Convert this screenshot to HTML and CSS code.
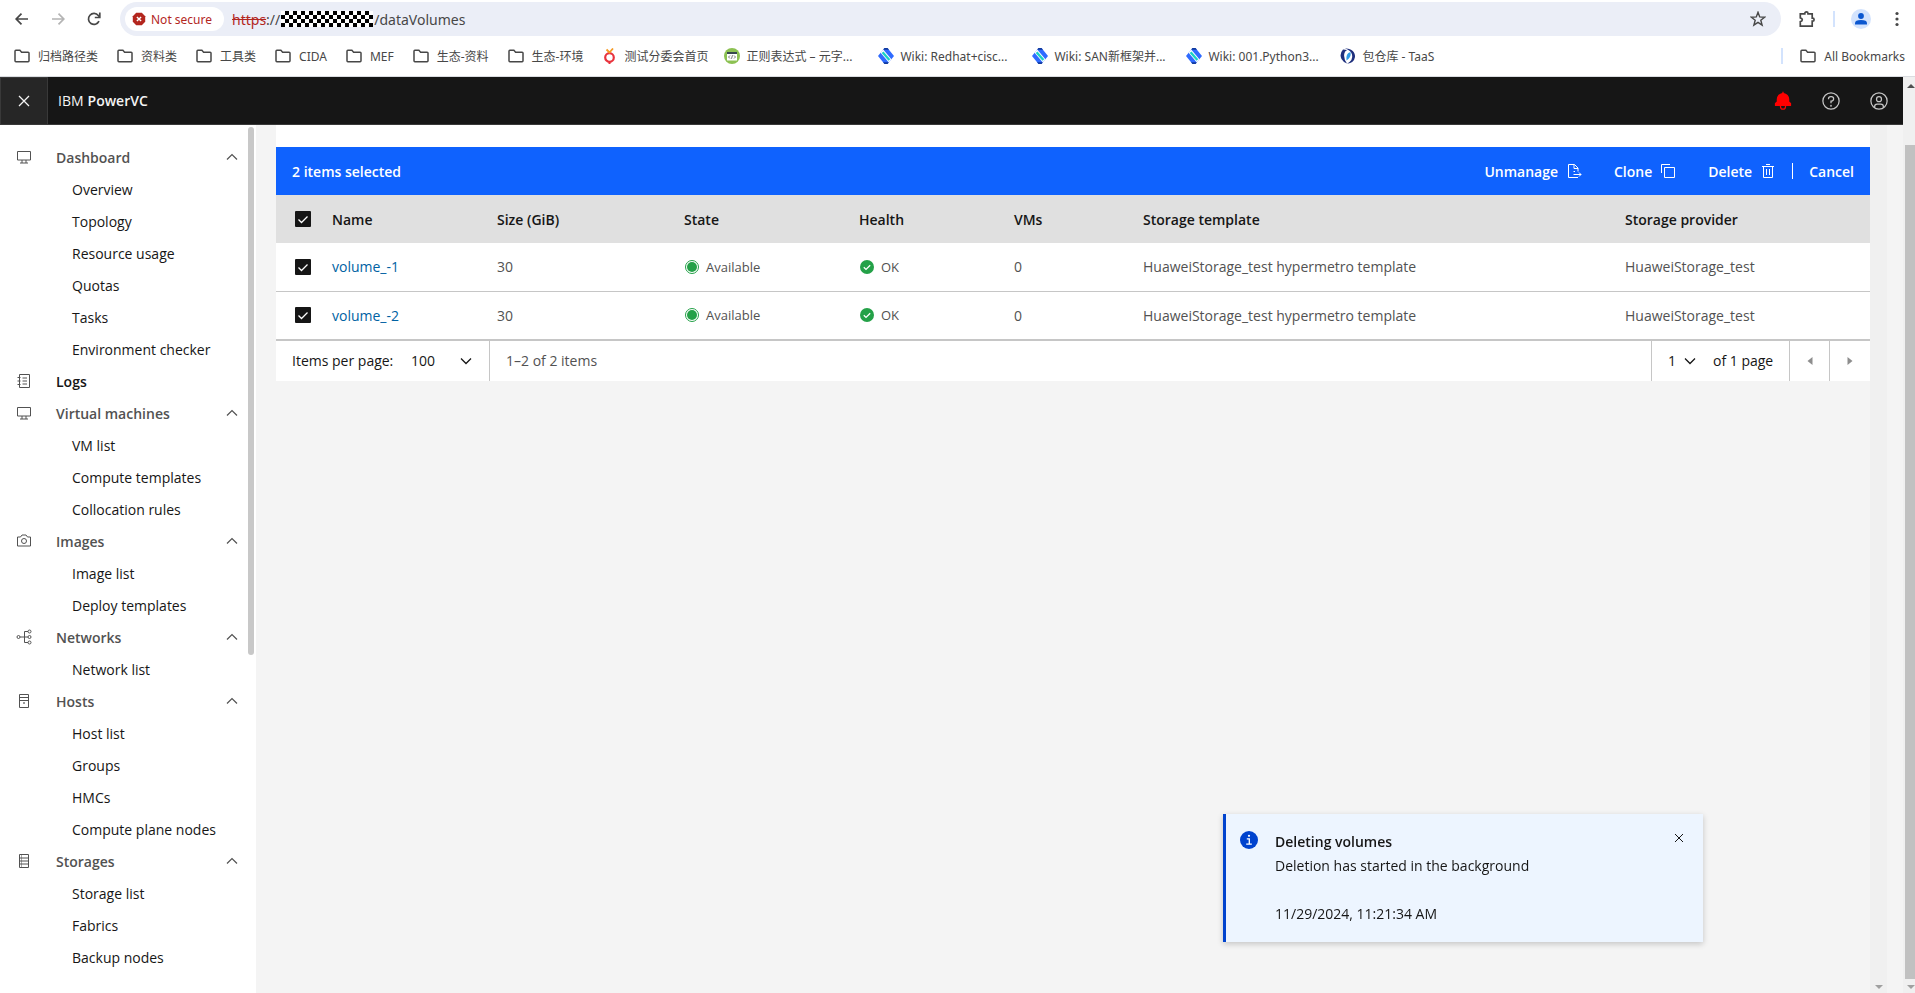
FILE: index.html
```html
<!DOCTYPE html>
<html lang="en">
  <head>
    <meta charset="UTF-8" />
    <meta name="viewport" content="width=device-width, initial-scale=1.0" />
    <title>IBM PowerVC</title>
    <link rel="stylesheet" href="styles.css">
  </head>
  <body>
    <!-- Shared icons -->
    <svg class="sprite" aria-hidden="true">
      <symbol id="folder" viewBox="0 0 16 16">
        <path d="M1 3.2q0-.9.9-.9h4l1.700 1.900h6.500q.9 0 .9.9v7.700q0 .9-.9.9H1.900q-.9 0-.9-.9z" fill="none" stroke="#474747" stroke-width="1.500" />
      </symbol>
      <symbol id="wiki" viewBox="0 0 16 16">
        <path d="M6.500 0h3L16 8 9.500 16h-3L0 8z" fill="#2f6bff" />
        <path d="M6.500 0h3l1.500 1.800H5zM9.500 16h-3L5 14.200h6z" fill="#123a9c" />
        <path d="M2.600 4.800 5.200 1.600 13.400 11.200 10.800 14.400z" fill="#fff" />
        <path d="M4.600 4.200 11.400 12" stroke="#19d3c5" stroke-width="2.400" />
      </symbol>
      <symbol id="screen" viewBox="0 0 32 32">
        <path d="M3 5h26v17H3zM12 22v6M20 22v6M8 28h16" fill="none" stroke="currentColor" stroke-width="2" />
      </symbol>
      <symbol id="chevron-up" viewBox="0 0 16 16">
        <path d="M3 10.500 8 5.500l5 5" fill="none" stroke="currentColor" stroke-width="1.200" />
      </symbol>
      <symbol id="chevron-down" viewBox="0 0 16 16">
        <path d="M3 5.500 8 10.500l5-5" fill="none" stroke="currentColor" stroke-width="1.300" />
      </symbol>
      <symbol id="close" viewBox="0 0 32 32">
        <path d="M8 8 24 24M24 8 8 24" fill="none" stroke="currentColor" stroke-width="2" />
      </symbol>
      <symbol id="available" viewBox="0 0 16 16">
        <circle cx="8" cy="8" r="6.500" fill="none" stroke="#24a148" />
        <circle cx="8" cy="8" r="5" fill="#24a148" />
      </symbol>
      <symbol id="ok" viewBox="0 0 16 16">
        <circle cx="8" cy="8" r="7" fill="#24a148" />
        <path d="M4.800 8.300 7 10.400 11.200 6.200" fill="none" stroke="#fff" stroke-width="1.300" />
      </symbol>
    </svg>

    <div class="browser">
      <div class="toolbar">
        <button class="nav-button" aria-label="Back">
          <svg viewBox="0 0 16 16"><path d="M14 8H2.500M7.500 2.700 2.200 8l5.300 5.300" fill="none" stroke="#474747" stroke-width="1.700" /></svg>
        </button>
        <button class="nav-button disabled" aria-label="Forward">
          <svg viewBox="0 0 16 16"><path d="M2 8h11.500M8.500 2.700 13.800 8l-5.300 5.300" fill="none" stroke="#b4b4b4" stroke-width="1.700" /></svg>
        </button>
        <button class="nav-button" aria-label="Reload">
          <svg viewBox="0 0 16 16"><path d="M13 10.200A5.500 5.500 0 1 1 12.300 4.500L13.500 6" fill="none" stroke="#474747" stroke-width="1.700" /><path d="M13.800 1.500v5H8.800" fill="none" stroke="#474747" stroke-width="1.700" /></svg>
        </button>
        <div class="address">
          <button class="secure">
            <svg class="danger-icon" viewBox="0 0 14 14"><path d="M4.200.8h5.600L13.200 4.200v5.600l-3.400 3.400H4.200L.8 9.800V4.200z" fill="#b3261e" /><path d="M4.900 4.900l4.200 4.200M9.100 4.900 4.900 9.100" stroke="#fff" stroke-width="1.400" /></svg>
            Not secure
          </button>
          <div class="url"><span class="scheme">https</span>://<span class="mask"></span>/dataVolumes</div>
          <button class="star" aria-label="Bookmark this tab">
            <svg viewBox="0 0 16 16"><path d="M8 1.300 9.700 5.900l5 .3-3.900 3.100 1.300 4.800L8 11.400l-4.100 2.700 1.300-4.800L1.300 6.200l5-.3z" fill="none" stroke="#474747" stroke-width="1.400" /></svg>
          </button>
        </div>
        <button class="tool-button" aria-label="Extensions">
          <svg class="puzzle" viewBox="0 0 18 18"><path d="M2.300 3.800h4.500V3.400a1.600 1.600 0 0 1 3.200 0v.4h4.200v4.400h.4a1.500 1.500 0 0 1 0 3h-.4v5H2.300v-4.500q2-.4 2-1.900t-2-1.900z" fill="none" stroke="#474747" stroke-width="1.700" /></svg>
        </button>
        <span class="divider"></span>
        <button class="tool-button profile" aria-label="Profile">
          <svg class="avatar" viewBox="0 0 20 20"><circle cx="10" cy="10" r="10" fill="#d3e3fd" /><circle cx="10" cy="7" r="2.900" fill="#0b57d0" /><path d="M4 15.500v-1.300q0-3.200 6-3.200t6 3.200v1.300z" fill="#0b57d0" /></svg>
        </button>
        <button class="tool-button" aria-label="Menu">
          <svg viewBox="0 0 16 16"><g fill="#474747"><circle cx="8" cy="2.500" r="1.600" /><circle cx="8" cy="8" r="1.600" /><circle cx="8" cy="13.500" r="1.600" /></g></svg>
        </button>
      </div>
      <div class="bookmarks">
        <a class="folder" href="#"><svg><use href="#folder" /></svg>归档路径类</a>
        <a class="folder" href="#"><svg><use href="#folder" /></svg>资料类</a>
        <a class="folder" href="#"><svg><use href="#folder" /></svg>工具类</a>
        <a class="folder" href="#"><svg><use href="#folder" /></svg>CIDA</a>
        <a class="folder" href="#"><svg><use href="#folder" /></svg>MEF</a>
        <a class="folder" href="#"><svg><use href="#folder" /></svg>生态-资料</a>
        <a class="folder" href="#"><svg><use href="#folder" /></svg>生态-环境</a>
        <a href="#">
          <svg viewBox="0 0 16 16"><circle cx="7.500" cy="9.500" r="4.300" fill="none" stroke="#e8323c" stroke-width="2.200" /><path d="M6.500 13h2v3h-2z" fill="#e8323c" /><path d="M4.500 1.500 7.500 4.500 11 .5" fill="none" stroke="#f59a23" stroke-width="1.800" /></svg>
          测试分委会首页
        </a>
        <a class="wide" href="#">
          <svg viewBox="0 0 16 16"><circle cx="8" cy="8" r="8" fill="#8cc152" /><path d="M3 4h10v8.500H3z" fill="#fff" /><path d="M3 4h10v2H3z" fill="#37474f" /><path d="M6 7.500 4.500 9 6 10.500M10 7.500 11.500 9 10 10.500M8.500 7.200 7.500 10.800" fill="none" stroke="#555" stroke-width=".8" /></svg>
          正则表达式 – 元字...
        </a>
        <a class="wide" href="#"><svg><use href="#wiki" /></svg>Wiki: Redhat+cisc...</a>
        <a class="wide" href="#"><svg><use href="#wiki" /></svg>Wiki: SAN新框架并...</a>
        <a class="wide" href="#"><svg><use href="#wiki" /></svg>Wiki: 001.Python3...</a>
        <a href="#">
          <svg viewBox="0 0 16 16"><path d="M5 .6C11 0 15.500 4 15 9q-1 6-8 6.800Q13.500 12 12 6.500 10.500 2 5 .6z" fill="#1e2f7d" /><path d="M3 1.500Q-1 6 1.500 11 3.500 14.500 7 15.500 3 10 4.500 5 5 3 7 2.300 5 1.400 3 1.500z" fill="#1e2f7d" /><path d="M10.500 4Q5.500 5 6.500 12.500 11.500 9.500 10.500 4z" fill="#2f9be6" /></svg>
          包仓库 - TaaS
        </a>
        <span class="divider bookmark-divider"></span>
        <a class="folder all-bookmarks" href="#"><svg><use href="#folder" /></svg>All Bookmarks</a>
      </div>
    </div>

    <div class="viewport">
      <div class="app">
        <header class="header">
          <button class="menu-button" aria-label="Close menu"><svg><use href="#close" /></svg></button>
          <a class="brand" href="#">IBM <b>PowerVC</b></a>
          <button class="header-button" aria-label="Notifications">
            <svg viewBox="0 0 32 32"><path d="M28.700 19.300 26 16.600V13a10 10 0 0 0-9-9.950V1h-2v2.050A10 10 0 0 0 6 13v3.600l-2.700 2.700A1 1 0 0 0 3 20v3a1 1 0 0 0 1 1h7v1a5 5 0 0 0 10 0v-1h7a1 1 0 0 0 1-1v-3a1 1 0 0 0-.3-.7zM19 25a3 3 0 0 1-6 0v-1h6z" fill="#ff0000" /></svg>
          </button>
          <button class="header-button" aria-label="Help">
            <svg viewBox="0 0 32 32" fill="none" stroke="currentColor" stroke-width="2"><circle cx="16" cy="16" r="13" /><path d="M12 13v-.5A3.500 3.500 0 0 1 15.500 9h1.200a3.500 3.500 0 0 1 0 7H16v3.500" /><circle cx="16" cy="23.500" r=".5" /></svg>
          </button>
          <button class="header-button" aria-label="User">
            <svg viewBox="0 0 32 32" fill="none" stroke="currentColor" stroke-width="2"><circle cx="16" cy="16" r="13" /><circle cx="16" cy="13" r="4" /><path d="M9 26.500V25a4 4 0 0 1 4-4h6a4 4 0 0 1 4 4v1.500" /></svg>
          </button>
        </header>

        <div class="content">
          <nav class="sidebar">
            <ul>
              <li><button class="group"><svg><use href="#screen" /></svg>Dashboard<svg class="chevron"><use href="#chevron-up" /></svg></button></li>
              <li><a href="#">Overview</a></li>
              <li><a href="#">Topology</a></li>
              <li><a href="#">Resource usage</a></li>
              <li><a href="#">Quotas</a></li>
              <li><a href="#">Tasks</a></li>
              <li><a href="#">Environment checker</a></li>
              <li>
                <a class="group logs" href="#">
                  <svg viewBox="0 0 32 32" fill="none" stroke="currentColor" stroke-width="2"><path d="M7 3h20v26H7zM3 9h6M3 16h6M3 23h6M13 10h9M13 16h9M13 22h9" /></svg>
                  Logs
                </a>
              </li>
              <li><button class="group"><svg><use href="#screen" /></svg>Virtual machines<svg class="chevron"><use href="#chevron-up" /></svg></button></li>
              <li><a href="#">VM list</a></li>
              <li><a href="#">Compute templates</a></li>
              <li><a href="#">Collocation rules</a></li>
              <li>
                <button class="group">
                  <svg viewBox="0 0 32 32" fill="none" stroke="currentColor" stroke-width="2"><path d="M3 8h6l3-4h8l3 4h6v18H3z" /><circle cx="16" cy="16" r="5" /></svg>
                  Images<svg class="chevron"><use href="#chevron-up" /></svg>
                </button>
              </li>
              <li><a href="#">Image list</a></li>
              <li><a href="#">Deploy templates</a></li>
              <li>
                <button class="group">
                  <svg viewBox="0 0 32 32" fill="none" stroke="currentColor" stroke-width="2"><circle cx="5" cy="16" r="3" /><circle cx="27" cy="5" r="3" /><circle cx="27" cy="16" r="3" /><circle cx="27" cy="27" r="3" /><path d="M8 16h16M24 5h-7v22h7" /></svg>
                  Networks<svg class="chevron"><use href="#chevron-up" /></svg>
                </button>
              </li>
              <li><a href="#">Network list</a></li>
              <li>
                <button class="group">
                  <svg viewBox="0 0 32 32" fill="none" stroke="currentColor" stroke-width="2"><path d="M7 3h18v26H7zM7 9h18M7 15h18" /><circle cx="16" cy="20" r="1" /></svg>
                  Hosts<svg class="chevron"><use href="#chevron-up" /></svg>
                </button>
              </li>
              <li><a href="#">Host list</a></li>
              <li><a href="#">Groups</a></li>
              <li><a href="#">HMCs</a></li>
              <li><a href="#">Compute plane nodes</a></li>
              <li>
                <button class="group">
                  <svg viewBox="0 0 32 32" fill="none" stroke="currentColor" stroke-width="2"><path d="M7 3h18v26H7zM7 10h18M7 16h18M7 22h18" /><path d="M11 4v24" stroke-width="1" /></svg>
                  Storages<svg class="chevron"><use href="#chevron-up" /></svg>
                </button>
              </li>
              <li><a href="#">Storage list</a></li>
              <li><a href="#">Fabrics</a></li>
              <li><a href="#">Backup nodes</a></li>
            </ul>
            <div class="sidebar-scroll"></div>
          </nav>

          <main class="main">
            <div class="volumes">
              <div class="batch-actions">
                <span class="selected-count">2 items selected</span>
                <button>Unmanage
                  <svg viewBox="0 0 32 32" fill="none" stroke="currentColor" stroke-width="2"><path d="M24 29H5V3h12l7 7v7M16 3v8h8M15 17h3M15 23h15M26 19l4 4-4 4" /></svg>
                </button>
                <button>Clone
                  <svg viewBox="0 0 32 32" fill="none" stroke="currentColor" stroke-width="2"><path d="M9 9h20v20H9zM3 20V3h17" /></svg>
                </button>
                <button>Delete
                  <svg viewBox="0 0 32 32" fill="none" stroke="currentColor" stroke-width="2"><path d="M4 7h24M7 7v22h18V7M12 3h8M13 12v12M19 12v12" /></svg>
                </button>
                <button class="cancel">Cancel</button>
              </div>
              <table>
                <colgroup>
                  <col class="col-check" />
                  <col class="col-name" />
                  <col class="col-size" />
                  <col class="col-state" />
                  <col class="col-health" />
                  <col class="col-vms" />
                  <col />
                  <col class="col-provider" />
                </colgroup>
                <thead>
                  <tr>
                    <th class="check"><input type="checkbox" aria-label="Select all" checked /></th>
                    <th>Name</th>
                    <th>Size (GiB)</th>
                    <th>State</th>
                    <th>Health</th>
                    <th>VMs</th>
                    <th>Storage template</th>
                    <th>Storage provider</th>
                  </tr>
                </thead>
                <tbody>
                  <tr>
                    <td class="check"><input type="checkbox" aria-label="Select volume_-1" checked /></td>
                    <td><a href="#">volume_-1</a></td>
                    <td>30</td>
                    <td><span class="status"><svg><use href="#available" /></svg>Available</span></td>
                    <td><span class="status"><svg><use href="#ok" /></svg>OK</span></td>
                    <td>0</td>
                    <td>HuaweiStorage_test hypermetro template</td>
                    <td>HuaweiStorage_test</td>
                  </tr>
                  <tr>
                    <td class="check"><input type="checkbox" aria-label="Select volume_-2" checked /></td>
                    <td><a href="#">volume_-2</a></td>
                    <td>30</td>
                    <td><span class="status"><svg><use href="#available" /></svg>Available</span></td>
                    <td><span class="status"><svg><use href="#ok" /></svg>OK</span></td>
                    <td>0</td>
                    <td>HuaweiStorage_test hypermetro template</td>
                    <td>HuaweiStorage_test</td>
                  </tr>
                </tbody>
              </table>
              <div class="pagination">
                <label class="page-size-label" for="page-size">Items per page:</label>
                <div class="select page-size">
                  <select id="page-size"><option>100</option></select>
                  <svg><use href="#chevron-down" /></svg>
                </div>
                <span class="range">1–2 of 2 items</span>
                <div class="select page-number">
                  <select id="page-number"><option>1</option></select>
                  <svg><use href="#chevron-down" /></svg>
                </div>
                <label class="page-total" for="page-number">of 1 page</label>
                <button aria-label="Previous page"><svg viewBox="0 0 16 16"><path d="M10.500 4v8L5.500 8z" fill="#8d8d8d" /></svg></button>
                <button aria-label="Next page"><svg viewBox="0 0 16 16"><path d="M5.500 4v8l5-4z" fill="#8d8d8d" /></svg></button>
              </div>
            </div>
            <div class="track">
              <span class="arrow-down"></span>
            </div>
          </main>
        </div>
      </div>
      <div class="page-scroll">
        <span class="arrow-up"></span>
        <div class="thumb"></div>
        <span class="arrow-down"></span>
      </div>
    </div>

    <div class="toast" role="status">
      <svg class="toast-icon" viewBox="0 0 20 20"><circle cx="10" cy="10" r="9" fill="#0043ce" /><circle cx="10" cy="5.800" r="1.100" fill="#fff" /><path d="M7.800 8.800h2.500v5.200M7.200 14.200h5.600" fill="none" stroke="#fff" stroke-width="1.300" /></svg>
      <div class="toast-text">
        <h3>Deleting volumes</h3>
        <p>Deletion has started in the background</p>
        <time>11/29/2024, 11:21:34 AM</time>
      </div>
      <button class="toast-close" aria-label="Close notification"><svg><use href="#close" /></svg></button>
    </div>
  </body>
</html>
```
FILE: styles.css
```css
* {
  box-sizing: border-box;
}

body {
  margin: 0;
  height: 100vh;
  overflow: hidden;
  display: flex;
  flex-direction: column;
  font-family: "Open Sans", "Liberation Sans", sans-serif;
  font-size: 14px;
  color: #161616;
  background-color: #f4f4f4;
}

button {
  padding: 0;
  border: none;
  background: none;
  font: inherit;
  color: inherit;
  cursor: pointer;
}

a {
  color: inherit;
  text-decoration: none;
}

svg {
  width: 16px;
  height: 16px;
  flex-shrink: 0;
  display: block;
}

.sprite {
  position: absolute;
  width: 0;
  height: 0;
}

/* Browser bars */
.browser {
  flex-shrink: 0;
  background-color: #ffffff;
  border-bottom: 1px solid #dadce0;
  font-family: "Noto Sans", "Noto Sans CJK SC", sans-serif;
  color: #474747;
}

.toolbar {
  display: flex;
  align-items: center;
  height: 38px;
  padding: 2px 0 2px 4px;
}

.nav-button {
  width: 36px;
  height: 34px;
  display: flex;
  align-items: center;
  justify-content: center;
}

.address {
  flex: 1;
  display: flex;
  align-items: center;
  height: 34px;
  margin: 0 8px;
  padding: 0 15px 0 5px;
  border-radius: 17px;
  background-color: #ebeef7;
}

.secure {
  display: flex;
  align-items: center;
  gap: 5px;
  height: 24px;
  padding: 0 12px 0 7px;
  border-radius: 12px;
  background-color: #ffffff;
  color: #b3261e;
  font-size: 12px;
}

.danger-icon {
  width: 14px;
  height: 14px;
}

.url {
  flex: 1;
  display: flex;
  align-items: center;
  margin-left: 8px;
  font-size: 14px;
}

.scheme {
  color: #b3261e;
  text-decoration: line-through;
}

.mask {
  width: 92px;
  height: 16px;
  margin: 0 1px;
  background: repeating-conic-gradient(#000000 0 25%, #ffffff 0 50%) 0 0 / 8px 8px;
}

.tool-button {
  width: 36px;
  height: 34px;
  display: flex;
  align-items: center;
  justify-content: center;
}

.puzzle {
  width: 18px;
  height: 18px;
}

.avatar {
  width: 20px;
  height: 20px;
}

.divider {
  width: 2px;
  height: 16px;
  margin: 0 8px;
  background-color: #d3e3fd;
}

.bookmarks {
  display: flex;
  align-items: center;
  height: 38px;
  padding: 0 10px 2px 14px;
  font-size: 12px;
  white-space: nowrap;
}

.bookmarks a {
  display: flex;
  align-items: center;
  gap: 6px;
  margin-right: 16px;
}

.bookmarks .folder {
  gap: 8px;
  margin-right: 19px;
}

.bookmarks .wide {
  width: 138px;
}

.bookmarks .bookmark-divider {
  margin: 0 17px 0 auto;
}

.bookmarks .all-bookmarks {
  margin-right: 0;
}

/* Application shell */
.viewport {
  flex: 1;
  min-height: 0;
  display: flex;
}

.app {
  flex: 1;
  min-width: 0;
  display: flex;
  flex-direction: column;
}

.header {
  display: flex;
  align-items: stretch;
  height: 48px;
  background-color: #161616;
  border-bottom: 1px solid #393939;
  color: #f4f4f4;
}

.menu-button,
.header-button {
  width: 48px;
  display: flex;
  align-items: center;
  justify-content: center;
}

.menu-button {
  background-color: #262626;
  border: 1px solid #393939;
  border-bottom: none;
}

.menu-button svg,
.header-button svg {
  width: 20px;
  height: 20px;
}

.header-button {
  color: #c6c6c6;
}

.brand {
  flex: 1;
  display: flex;
  align-items: center;
  gap: 4px;
  padding-left: 10px;
}

.brand b {
  font-weight: 600;
}

.content {
  flex: 1;
  min-height: 0;
  display: flex;
}

.sidebar {
  width: 256px;
  display: flex;
  padding: 2px 2px 0 0;
  background-color: #ffffff;
}

.sidebar ul {
  flex: 1;
  margin: 0;
  padding: 14px 0 0;
  list-style: none;
}

.sidebar li a,
.sidebar li button {
  display: flex;
  align-items: center;
  width: 100%;
  height: 32px;
  padding-left: 72px;
}

.sidebar li .group {
  gap: 24px;
  padding: 0 8px 0 16px;
  color: #525252;
  font-weight: 600;
}

.sidebar li .logs {
  color: #161616;
}

.sidebar svg {
  color: #525252;
}

.sidebar .chevron {
  margin-left: auto;
}

.sidebar-scroll {
  width: 6px;
  height: 528px;
  border-radius: 3px;
  background-color: #c8c8c8;
}

.main {
  flex: 1;
  min-width: 0;
  display: flex;
  padding: 0 16px 0 20px;
}

.volumes {
  flex: 1;
  min-width: 0;
}

.batch-actions {
  display: flex;
  align-items: center;
  height: 70px;
  border-top: 22px solid #ffffff;
  background-color: #0f62fe;
  color: #ffffff;
  font-weight: 600;
}

.selected-count {
  flex: 1;
  padding-left: 16px;
}

.batch-actions button {
  display: flex;
  align-items: center;
  gap: 8px;
  padding: 0 16px;
}

.batch-actions .cancel {
  height: 16px;
  border-left: 1px solid #ffffff;
}

table {
  width: 100%;
  table-layout: fixed;
  border-collapse: collapse;
}

.col-check {
  width: 56px;
}

.col-name {
  width: 165px;
}

.col-size {
  width: 187px;
}

.col-state {
  width: 175px;
}

.col-health {
  width: 155px;
}

.col-vms {
  width: 129px;
}

.col-provider {
  width: 245px;
}

th,
td {
  height: 48px;
  padding: 0;
  text-align: left;
}

th {
  background-color: #e0e0e0;
  font-weight: 600;
}

td {
  background-color: #ffffff;
  border-bottom: 1px solid #c6c6c6;
  color: #525252;
}

td a {
  color: #0062a3;
}

th.check,
td.check {
  padding-left: 19px;
}

.check input {
  appearance: none;
  display: block;
  width: 16px;
  height: 16px;
  margin: 0;
  border-radius: 1px;
  background: #161616 url("data:image/svg+xml,%3Csvg xmlns='http://www.w3.org/2000/svg' viewBox='0 0 16 16'%3E%3Cpath d='M3.500 8.500 6.500 11.500 12.500 5.500' fill='none' stroke='white' stroke-width='1.300'/%3E%3C/svg%3E");
}

.status {
  display: flex;
  align-items: center;
  gap: 6px;
  font-size: 13px;
}

.pagination {
  display: flex;
  align-items: center;
  height: 41px;
  padding: 0 1px 0 16px;
  border-top: 1px solid #c6c6c6;
  background-color: #ffffff;
  white-space: nowrap;
}

.select {
  position: relative;
  display: flex;
  align-items: center;
  height: 40px;
}

.select select {
  appearance: none;
  width: 100%;
  height: 40px;
  padding: 0 0 0 16px;
  border: none;
  background: none;
  font: inherit;
  color: inherit;
}

.select svg {
  position: absolute;
  right: 15px;
  pointer-events: none;
}

.page-size-label {
  width: 103px;
}

.page-size {
  width: 95px;
  border-right: 1px solid #c6c6c6;
}

.range {
  flex: 1;
  padding-left: 16px;
  color: #525252;
}

.page-number {
  width: 62px;
  border-left: 1px solid #c6c6c6;
}

.page-total {
  width: 76px;
}

.pagination button {
  display: flex;
  align-items: center;
  justify-content: center;
  width: 40px;
  height: 40px;
  border-left: 1px solid #c6c6c6;
}

/* Scroll bars */
.track,
.page-scroll {
  display: flex;
  flex-direction: column;
  background-color: #f0f0f0;
}

.track {
  width: 17px;
  align-items: center;
  justify-content: flex-end;
  padding-bottom: 4px;
}

.page-scroll {
  width: 12px;
  align-items: flex-end;
  padding: 7px 0 4px;
  gap: 6px;
}

.thumb {
  flex: 1;
  width: 10px;
  margin-top: 51px;
  background-color: #c1c1c1;
}

.arrow-up,
.arrow-down {
  border: 4px solid transparent;
}

.arrow-up {
  border-top: none;
  border-bottom-color: #505050;
}

.arrow-down {
  border-bottom: none;
  border-top-color: #a0a0a0;
}

/* Notification */
.toast {
  position: fixed;
  right: 212px;
  bottom: 51px;
  display: flex;
  align-items: flex-start;
  width: 480px;
  padding: 16px 16px 16px 13px;
  border-left: 3px solid #0043ce;
  background-color: #edf5ff;
  box-shadow: 0 2px 6px rgba(0, 0, 0, 0.2);
}

.toast-icon {
  width: 20px;
  height: 20px;
}

.toast-text {
  flex: 1;
  padding-left: 16px;
  line-height: 24px;
}

.toast-text h3,
.toast-text p {
  margin: 0;
  font-size: 14px;
}

.toast-text h3 {
  font-weight: 600;
}

.toast-text time {
  display: block;
  margin-top: 24px;
}
```
